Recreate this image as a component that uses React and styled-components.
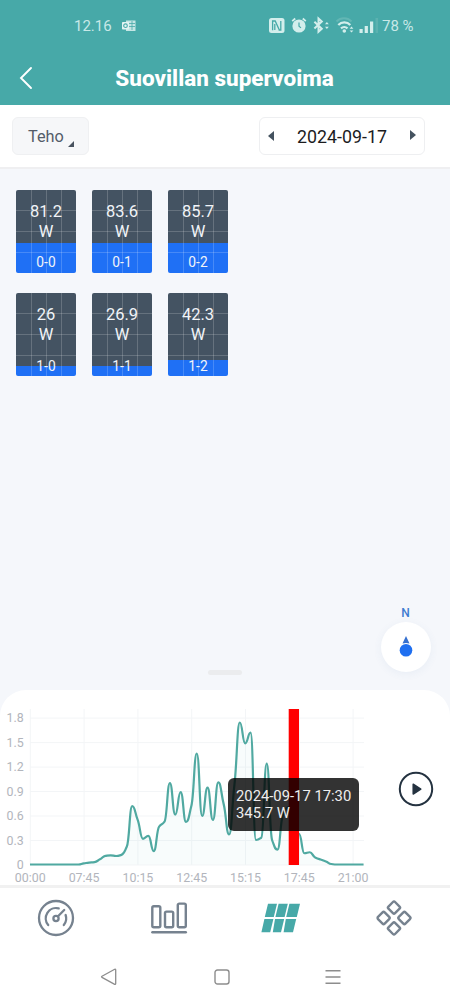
import styled, { createGlobalStyle } from "styled-components";

const PANELS = [
  { id: "0-0", value: "81.2", fill: 30 },
  { id: "0-1", value: "83.6", fill: 30 },
  { id: "0-2", value: "85.7", fill: 30 },
  { id: "1-0", value: "26", fill: 10 },
  { id: "1-1", value: "26.9", fill: 10 },
  { id: "1-2", value: "42.3", fill: 16.5 },
];

// power in kW, one sample per 15 minutes of daylight
const POWER = [
  0, 0, 0, 0, 0, 0, 0, 0, 0, 0, 0.014, 0.024, 0.03, 0.063, 0.105, 0.112, 0.104,
  0.118, 0.22, 0.715, 0.55, 0.315, 0.35, 0.165, 0.465, 0.525, 0.998, 0.612,
  0.887, 0.522, 0.72, 1.36, 0.595, 0.942, 0.546, 1.006, 0.74, 0.37, 0.98, 1.74,
  1.485, 1.615, 0.3, 0.33, 1.235, 0.3, 0.183, 0.6, 0.7, 0.346, 0.375, 0.138,
  0.15, 0.087, 0.062, 0.037, 0.006, 0, 0, 0, 0, 0, 0,
];

const TIMES = ["00:00", "07:45", "10:15", "12:45", "15:15", "17:45", "21:00"];
const LEVELS = ["0", "0.3", "0.6", "0.9", "1.2", "1.5", "1.8"];

const LEFT = 30;
const BASE = 174.5;
const STEP = 5.38;
const UNIT = 81.6;

// monotone cubic curve, so that peaks never overshoot their samples
const linePath = (values) => {
  const pts = values.map((v, i) => [LEFT + i * STEP, BASE - v * UNIT]);
  const slope = (i) => (pts[i + 1][1] - pts[i][1]) / STEP;
  const tangents = pts.map((_, i) => {
    if (i === 0 || i === pts.length - 1) return 0;
    const a = slope(i - 1);
    const b = slope(i);
    return a * b <= 0 ? 0 : (1.7 * a * b) / (a + b);
  });
  const h = STEP / 2;
  return pts
    .map(([x, y], i) => {
      if (i === 0) return `M${x} ${y}`;
      const [px, py] = pts[i - 1];
      return `C${px + h} ${py + tangents[i - 1] * h} ${x - h} ${
        y - tangents[i] * h
      } ${x} ${y}`;
    })
    .join("");
};

const StatusIcons = () => (
  <svg width="119" height="20" viewBox="268 16 119 20" fill="#d3eeec">
    <rect x="269" y="18" width="15.5" height="15" rx="2.5" />
    <path
      d="M272.6 30.2V21h2.6l4 8.800M280.800 21v9h-2.200M274.800 24v6"
      fill="none"
      stroke="#47a9a8"
      strokeWidth="1.3"
    />
    <circle cx="299" cy="26" r="6.6" />
    <path
      d="M292.2 21.2l3-2.7M305.8 21.2l-3-2.7"
      stroke="#d3eeec"
      strokeWidth="1.8"
    />
    <path
      d="M299 22.5v3.8l2 1.6"
      fill="none"
      stroke="#47a9a8"
      strokeWidth="1.2"
    />
    <path
      d="M314.4 21.800l7.4 7-3.3 3V18.5l3.3 3-7.4 7"
      fill="none"
      stroke="#d3eeec"
      strokeWidth="2"
    />
    <path d="M325 24.300l1.900-2.400 1.900 2.400zM325 26.700l1.900 2.400 1.900-2.400z" />
    <path
      d="M336.5 21.5a10.5 10.5 0 0 1 15 0"
      fill="none"
      stroke="#62b6b4"
      strokeWidth="2"
    />
    <path
      d="M338.3 25a8.2 8.2 0 0 1 12 0M341 28.4a4.8 4.8 0 0 1 6.5 0"
      fill="none"
      stroke="#d3eeec"
      strokeWidth="2.200"
    />
    <circle cx="344.3" cy="31" r="1.8" />
    <path d="M349.6 28.8l1.900-2.200 1.900 2.200zM349.6 30.4l1.900 2.200 1.900-2.200z" />
    <path d="M359.5 29h3.200v4h-3.200zM364.7 26h3.200v7h-3.200zM370 21.5h3.200V33h-3.200z" />
    <rect x="375.5" y="18" width="2.6" height="15" fill="#5bb2b0" />
  </svg>
);

const OutlookIcon = () => (
  <svg width="14" height="12" viewBox="0 0 14 12">
    <path d="M4 .5h9.5v10.5H4z" fill="#c5e6e5" />
    <path
      d="M7 3.5h6M7 6.5h6M10 1v9"
      stroke="#47a9a8"
      strokeWidth=".8"
      fill="none"
    />
    <rect y="2" width="7" height="7.5" rx=".8" fill="#e3f4f3" />
    <circle
      cx="3.5"
      cy="5.7"
      r="1.8"
      fill="none"
      stroke="#47a9a8"
      strokeWidth="1.1"
    />
  </svg>
);

const BackIcon = () => (
  <svg width="14" height="24" viewBox="0 0 14 24">
    <path
      d="M12 2L2 12 12 22"
      fill="none"
      stroke="#fff"
      strokeWidth="1.9"
      strokeLinecap="round"
    />
  </svg>
);

const GaugeIcon = () => (
  <svg width="38" height="38" viewBox="0 0 38 38">
    <g fill="none" stroke="#76828f" strokeWidth="2.3" strokeLinecap="round">
      <circle cx="19" cy="19" r="17" />
      <circle cx="19" cy="19.5" r="2.6" />
      <path d="M21 17.2l6.2-6.2M11.2 26a10.3 10.3 0 0 1 10.5-16.6M28.6 16a10.3 10.3 0 0 1-1.8 10" />
    </g>
  </svg>
);

const BarsIcon = () => (
  <svg width="38" height="34" viewBox="0 0 38 34">
    <g fill="none" stroke="#76828f" strokeWidth="2.4" strokeLinecap="round">
      <rect x="2.3" y="5.2" width="8" height="21" rx="1.5" />
      <rect x="15" y="10.6" width="8.2" height="15.6" rx="1.5" />
      <rect x="27.8" y="2.6" width="8" height="23.6" rx="1.5" />
      <path d="M2.4 31.3h33.4" />
    </g>
  </svg>
);

const SolarIcon = () => (
  <svg width="40" height="30" viewBox="0 0 40 30" fill="#47a9a8">
    <path d="M7 .7h9l-3.2 13.2h-9zM17.6.7h9.2l-3.2 13.2h-9.2zM28.4.7H39l-3.2 13.2H25.2z" />
    <path d="M3.4 16.1h9L9.2 29.3H.4zM14 16.1h9.2L20 29.3h-8.2zM24.8 16.1h10.4L32 29.3h-9.4z" />
  </svg>
);

const ModulesIcon = () => (
  <svg width="38" height="38" viewBox="0 0 38 38">
    <g fill="none" stroke="#76828f" strokeWidth="2.4">
      {[
        [19, 8.6],
        [8.6, 19],
        [29.4, 19],
        [19, 29.4],
      ].map(([x, y]) => (
        <rect
          key={`${x}-${y}`}
          x={x - 4.7}
          y={y - 4.7}
          width="9.4"
          height="9.4"
          rx="1.5"
          transform={`rotate(45 ${x} ${y})`}
        />
      ))}
    </g>
  </svg>
);

const PowerChart = () => {
  const line = linePath(POWER);
  const end = LEFT + (POWER.length - 1) * STEP;
  return (
    <svg width="376" height="195" viewBox="0 0 376 195">
      <g stroke="#f3f5f7" strokeWidth="1">
        {LEVELS.map((l, i) => (
          <path key={l} d={`M30 ${BASE + 0.5 - i * 24.48}H364`} />
        ))}
        {TIMES.map((t, i) => (
          <path key={t} d={`M${30.3 + i * 53.8} 19V175`} />
        ))}
      </g>
      <path d={`${line}L${end} ${BASE}H30Z`} fill="#47a9a8" opacity=".04" />
      <path d={line} fill="none" stroke="#50a9a1" strokeWidth="2.200" />
      <rect x="288.7" y="19" width="10.3" height="156" fill="#f00" />
      <AxisText textAnchor="end">
        {LEVELS.map((l, i) => (
          <text key={l} x="23.8" y={179.2 - i * 24.48}>
            {l}
          </text>
        ))}
      </AxisText>
      <AxisText textAnchor="middle">
        {TIMES.map((t, i) => (
          <text key={t} x={30.3 + i * 53.8} y="192">
            {t}
          </text>
        ))}
      </AxisText>
    </svg>
  );
};

const App = () => (
  <>
    <GlobalStyle />
    <Screen>
      <Header>
        <StatusBar>
          <StatusLeft>
            <span>12.16</span>
            <OutlookIcon />
          </StatusLeft>
          <StatusRight>
            <StatusIcons />
            <Battery>78 %</Battery>
          </StatusRight>
        </StatusBar>
        <TitleBar>
          <BackIcon />
          <Title>Suovillan supervoima</Title>
        </TitleBar>
      </Header>

      <Toolbar>
        <ModeButton>
          Teho
          <svg width="6" height="6" viewBox="0 0 6 6">
            <path d="M6 0v6H0z" fill="#48525f" />
          </svg>
        </ModeButton>
        <DatePicker>
          <svg width="6" height="10" viewBox="0 0 6 10">
            <path d="M6 0v10L0 5z" fill="#44525f" />
          </svg>
          <span>2024-09-17</span>
          <svg width="6" height="12" viewBox="0 0 6 12">
            <path d="M0 0v10l6-5z" fill="#44525f" />
          </svg>
        </DatePicker>
      </Toolbar>

      <Roof>
        <PanelGrid>
          {PANELS.map((p) => (
            <Panel key={p.id} $fill={p.fill}>
              <PanelValue>
                {p.value}
                <br />W
              </PanelValue>
              <PanelId>{p.id}</PanelId>
            </Panel>
          ))}
        </PanelGrid>
        <CompassArea>
          <North>N</North>
          <Compass>
            <svg width="14" height="22" viewBox="0 0 14 22">
              <path d="M7 0L10.5 7.600Q7 6.500 3.500 7.600z" fill="#3670cf" />
              <circle cx="7" cy="14.300" r="6.300" fill="#1f6ff0" />
            </svg>
          </Compass>
        </CompassArea>
        <Handle />
      </Roof>

      <Sheet>
        <ChartBox>
          <PowerChart />
          <Tooltip>
            2024-09-17 17:30
            <br />
            345.7 W
          </Tooltip>
        </ChartBox>
        <PlayButton>
          <svg width="36" height="36" viewBox="0 0 36 36">
            <circle
              cx="18"
              cy="18"
              r="16.200"
              fill="none"
              stroke="#243240"
              strokeWidth="2"
            />
            <path
              d="M15.200 13.200v9.800l7.600-4.900z"
              fill="#243240"
              stroke="#243240"
              strokeWidth="1.500"
              strokeLinejoin="round"
            />
          </svg>
        </PlayButton>
      </Sheet>

      <TabBar>
        <Tab>
          <GaugeIcon />
        </Tab>
        <Tab>
          <BarsIcon />
        </Tab>
        <Tab>
          <SolarIcon />
        </Tab>
        <Tab>
          <ModulesIcon />
        </Tab>
      </TabBar>

      <SystemNav>
        <svg width="18" height="18" viewBox="0 0 18 18">
          <path
            d="M14.700 1.300L2 8.200q-.9.600 0 1.200l12.700 6.900q1 .4 1-.7V2q0-1.100-1-.7z"
            fill="none"
            stroke="#8d8d8d"
            strokeWidth="1.300"
          />
        </svg>
        <svg width="16" height="16" viewBox="0 0 16 16">
          <rect
            x="1"
            y="1"
            width="14"
            height="14"
            rx="2.500"
            fill="none"
            stroke="#8d8d8d"
            strokeWidth="1.400"
          />
        </svg>
        <svg width="16" height="16" viewBox="0 0 16 16">
          <path
            d="M.5 1.700h15M.5 8h15M.5 14.200h15"
            stroke="#8d8d8d"
            strokeWidth="1.400"
          />
        </svg>
      </SystemNav>
    </Screen>
  </>
);

export default App;

const GlobalStyle = createGlobalStyle`
  * {
    box-sizing: border-box;
  }

  body {
    margin: 0;
    font-family: Roboto, "Liberation Sans", sans-serif;
  }

  svg {
    display: block;
    flex-shrink: 0;
  }

  button {
    font: inherit;
    border: none;
    background: none;
    padding: 0;
  }
`;

const Screen = styled.div`
  display: flex;
  flex-direction: column;
  width: 450px;
  height: 1004px;
  overflow: hidden;
  background: #f5f7fb;
`;

const Header = styled.header`
  height: 105px;
  background: #47a9a8;
  color: #fff;
`;

const StatusBar = styled.div`
  display: flex;
  justify-content: space-between;
  align-items: center;
  height: 52px;
  padding: 0 37px 0 74px;
  font-size: 15px;
  color: #c8e8e7;
`;

const StatusLeft = styled.div`
  display: flex;
  align-items: center;
  gap: 10px;
`;

const StatusRight = styled.div`
  display: flex;
  align-items: center;
  width: 145px;
`;

const Battery = styled.span`
  margin-left: -5px;
  white-space: nowrap;
`;

const TitleBar = styled.div`
  display: flex;
  align-items: center;
  height: 52px;
  padding: 0 19px;
`;

const Title = styled.h1`
  flex: 1;
  margin: 0 15px 0 0;
  text-align: center;
  font-size: 22.5px;
  font-weight: 800;
`;

const Toolbar = styled.div`
  display: flex;
  justify-content: space-between;
  align-items: center;
  height: 64px;
  padding: 0 25px 0 12px;
  border-bottom: 2px solid #efeff1;
  background: #fff;
`;

const ModeButton = styled.button`
  display: flex;
  align-items: center;
  justify-content: space-between;
  width: 77px;
  height: 38px;
  padding: 0 14px 0 15px;
  border: 1px solid #eff0f2;
  border-radius: 6px;
  background: #f6f7f9;
  font-size: 16.3px;
  color: #535c69;

  svg {
    margin-top: 16px;
  }
`;

const DatePicker = styled.div`
  display: flex;
  align-items: center;
  justify-content: space-between;
  width: 166px;
  height: 38px;
  padding: 0 8px;
  border: 1px solid #eeeff1;
  border-radius: 6px;
  font-size: 17.8px;
  color: #1c1c1e;
`;

const Roof = styled.main`
  display: flex;
  flex-direction: column;
  justify-content: space-between;
  height: 521px;
  padding: 20.5px 16px 15px;
`;

const PanelGrid = styled.div`
  display: grid;
  grid-template-columns: repeat(3, 60px);
  gap: 20px 16px;
  height: 416px;
  align-content: start;
`;

const line = "rgba(255, 255, 255, 0.18)";

const Panel = styled.div`
  display: flex;
  flex-direction: column;
  align-items: center;
  justify-content: space-between;
  height: 83.3px;
  padding: 12px 0 1.5px;
  border-radius: 2px;
  color: #f1f4f8;
  background:
    linear-gradient(${line}, ${line}) 15px 0 / 1px 100% no-repeat,
    linear-gradient(${line}, ${line}) 30px 0 / 1px 100% no-repeat,
    linear-gradient(${line}, ${line}) 45px 0 / 1px 100% no-repeat,
    linear-gradient(${line}, ${line}) 0 20.5px / 100% 1px no-repeat,
    linear-gradient(${line}, ${line}) 0 41.5px / 100% 1px no-repeat,
    linear-gradient(${line}, ${line}) 0 62.5px / 100% 1px no-repeat,
    linear-gradient(#1f70f5, #1f70f5) 0 100% / 100% ${(p) => p.$fill}px no-repeat,
    #445362;
`;

const PanelValue = styled.div`
  font-size: 16.5px;
  line-height: 20.5px;
  text-align: center;
`;

const PanelId = styled.div`
  font-size: 13.8px;
  line-height: 17px;
`;

const CompassArea = styled.div`
  display: flex;
  flex-direction: column;
  align-items: center;
  align-self: flex-end;
  width: 50px;
  margin-right: 3.5px;
`;

const North = styled.div`
  height: 16px;
  font-size: 12px;
  font-weight: 500;
  line-height: 15px;
  color: #3f7bd0;
`;

const Compass = styled.div`
  display: flex;
  align-items: center;
  justify-content: center;
  width: 50px;
  height: 50px;
  border-radius: 50%;
  background: #fff;
  box-shadow: 0 2px 8px rgba(70, 110, 170, 0.07);
`;

const Handle = styled.div`
  align-self: center;
  flex-shrink: 0;
  width: 34px;
  height: 5px;
  margin-top: -2px;
  border-radius: 3px;
  background: #ebecee;
`;

const Sheet = styled.section`
  display: flex;
  height: 195px;
  border-radius: 26px 26px 0 0;
  background: #fff;
`;

const ChartBox = styled.div`
  position: relative;
  width: 398px;
`;

const AxisText = styled.g`
  font-size: 12.4px;
  fill: #b2b5bc;
`;

const Tooltip = styled.div`
  position: absolute;
  left: 228px;
  top: 88px;
  width: 131px;
  height: 53px;
  padding: 9.5px 8px;
  border-radius: 6px;
  background: rgba(0, 0, 0, 0.8);
  color: #eee;
  font-size: 14.8px;
  line-height: 17.5px;
  white-space: nowrap;
`;

const PlayButton = styled.button`
  align-self: center;
  margin-top: 2px;
`;

const TabBar = styled.nav`
  display: grid;
  grid-template-columns: repeat(4, 1fr);
  height: 66px;
  padding-bottom: 3px;
  border-top: 3px solid #f1f1f1;
  background: #fff;
`;

const Tab = styled.button`
  display: flex;
  align-items: center;
  justify-content: center;
`;

const SystemNav = styled.div`
  display: flex;
  align-items: center;
  justify-content: space-between;
  height: 53px;
  padding: 0 109px 2px 100px;
  background: #fff;
`;
